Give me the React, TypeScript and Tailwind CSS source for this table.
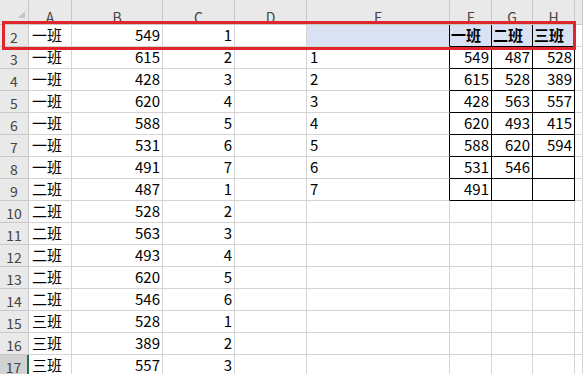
import React from 'react'

const COLS = 'grid grid-cols-[29px_43px_91px_72px_72px_143px_42px_41px_42px_1fr]'
const LETTERS = ['A', 'B', 'C', 'D', 'E', 'F', 'G', 'H', '']

type Row = { n: number; a: string; b: number; c: number; e?: number; t?: (number | string)[] }

const rows: Row[] = [
  { n: 2, a: '一班', b: 549, c: 1, t: ['一班', '二班', '三班'] },
  { n: 3, a: '一班', b: 615, c: 2, e: 1, t: [549, 487, 528] },
  { n: 4, a: '一班', b: 428, c: 3, e: 2, t: [615, 528, 389] },
  { n: 5, a: '一班', b: 620, c: 4, e: 3, t: [428, 563, 557] },
  { n: 6, a: '一班', b: 588, c: 5, e: 4, t: [620, 493, 415] },
  { n: 7, a: '一班', b: 531, c: 6, e: 5, t: [588, 620, 594] },
  { n: 8, a: '一班', b: 491, c: 7, e: 6, t: [531, 546, ''] },
  { n: 9, a: '二班', b: 487, c: 1, e: 7, t: [491, '', ''] },
  { n: 10, a: '二班', b: 528, c: 2 },
  { n: 11, a: '二班', b: 563, c: 3 },
  { n: 12, a: '二班', b: 493, c: 4 },
  { n: 13, a: '二班', b: 620, c: 5 },
  { n: 14, a: '二班', b: 546, c: 6 },
  { n: 15, a: '三班', b: 528, c: 1 },
  { n: 16, a: '三班', b: 389, c: 2 },
  { n: 17, a: '三班', b: 557, c: 3 },
]

const cell = 'h-[22px] border-r border-b border-[#d4d4d4] flex items-end pb-[1px] text-[15px] leading-[20px] text-black overflow-hidden whitespace-nowrap'

export default function App() {
  return (
    <div className="relative w-[583px] h-[374px] overflow-hidden bg-white font-['Noto_Sans_CJK_SC','Liberation_Sans',sans-serif]">
      {/* column header */}
      <div className={`${COLS} h-[25px] bg-[#e9e9e9]`}>
        <div className="border-r border-b border-[#c8c8c8] relative">
          <div className="absolute left-[18px] top-[11px] w-0 h-0 border-l-[7px] border-l-transparent border-b-[7px] border-b-[#c4c4c4]" />
        </div>
        {LETTERS.map((l, i) => (
          <div
            key={i}
            className="border-r border-b border-[#c8c8c8] flex items-end justify-center text-[14px] leading-[14px] text-[#444]"
          >
            {l}
          </div>
        ))}
      </div>

      {rows.map((r) => {
        const inTable = !!r.t
        const head = r.n === 2
        return (
          <div key={r.n} className={COLS}>
            <div
              className={`h-[22px] border-b border-[#c8c8c8] flex items-end justify-center text-[14px] leading-[18px] text-[#444] ${
                r.n === 17 ? 'bg-[#d2d2d2] border-r-2 border-r-[#217346]' : 'bg-[#e9e9e9] border-r border-r-[#c8c8c8]'
              }`}
            >
              {r.n}
            </div>
            <div className={`${cell} pl-[3px]`}>{r.a}</div>
            <div className={`${cell} justify-end pr-[2px]`}>{r.b}</div>
            <div className={`${cell} justify-end pr-[2px]`}>{r.c}</div>
            <div className={cell} />
            <div
              className={`${cell} pl-[3px] ${head ? 'bg-[#d9e1f2]' : ''} ${inTable ? 'border-r-black' : ''}`}
            >
              {r.e ?? ''}
            </div>
            {[0, 1, 2].map((k) => (
              <div
                key={k}
                className={`${cell} ${
                  inTable ? 'border-r-black border-b-black' : ''
                } ${head ? 'bg-[#d9e1f2] font-bold pl-[1px]' : 'justify-end pr-[2px]'}`}
              >
                {r.t ? r.t[k] : ''}
              </div>
            ))}
            <div className={cell} />
          </div>
        )
      })}

      {/* red highlight around row 2 */}
      <div className="absolute left-[2px] top-[21px] w-[574px] h-[29px] border-[3px] border-[#e0252b] pointer-events-none" />
    </div>
  )
}
